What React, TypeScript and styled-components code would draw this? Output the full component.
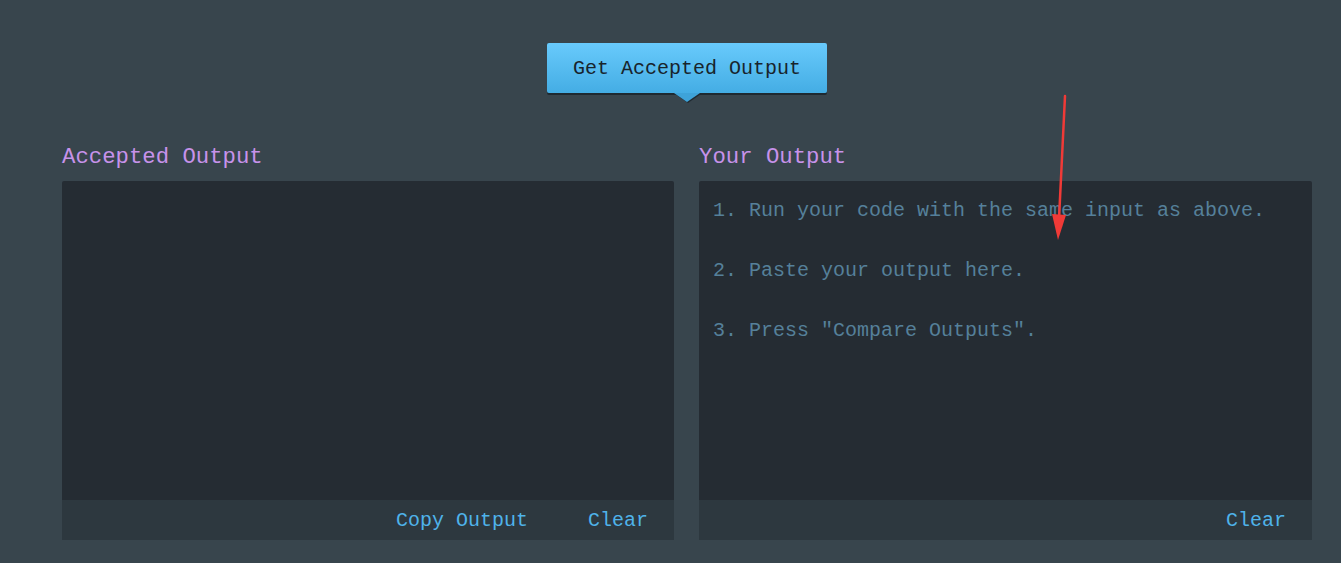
import React from 'react';
import styled, {createGlobalStyle} from "styled-components";

const GlobalStyle = createGlobalStyle`
    html, body {
        margin: 0;
        padding: 0;
        background: #38454d;
    }
    body {
        font-family: "Liberation Mono", "DejaVu Sans Mono", monospace;
    }
`

const placeholder = '1. Run your code with the same input as above.\n\n2. Paste your output here.\n\n3. Press "Compare Outputs".'

type PanelProps = {
    title: string
    placeholder?: string
    actions: string[]
}

const Panel = (props: PanelProps) => {
    return (
        <StyledPanel>
            <Heading>{props.title}</Heading>
            <Area placeholder={props.placeholder} spellCheck={false}/>
            <Footer>
                {props.actions.map(a => <Action key={a}>{a}</Action>)}
            </Footer>
        </StyledPanel>
    );
};

const Arrow = () => (
    <ArrowSvg width="30" height="160" viewBox="0 0 30 160">
        <path d="M21 2 L15 125" stroke="#f03a37" strokeWidth="2.5" strokeLinecap="round"/>
        <path d="M8 120 L22 121 L14 146 Z" fill="#f03a37"/>
    </ArrowSvg>
)

export default function App() {
    return (
        <Page>
            <GlobalStyle/>
            <Top>
                <FetchButton>Get Accepted Output</FetchButton>
            </Top>
            <Columns>
                <Panel title="Accepted Output" actions={['Copy Output', 'Clear']}/>
                <Panel title="Your Output" placeholder={placeholder} actions={['Clear']}/>
            </Columns>
            <Arrow/>
        </Page>
    );
}

const Page = styled.div`
    position: relative;
    width: 1250px;
    height: 520px;
    padding: 43px 0 0 62px;
`

const Top = styled.div`
    display: flex;
    justify-content: center;
`

const FetchButton = styled.button`
    position: relative;
    width: 280px;
    height: 50px;
    border: none;
    border-radius: 2px;
    background: linear-gradient(#68cafc, #44ade4);
    box-shadow: 0 2px 0 #1f2a31;
    color: #18242c;
    font-family: "Liberation Mono", "DejaVu Sans Mono", monospace;
    font-size: 20px;
    padding: 0;
    cursor: pointer;

    &::after {
        content: '';
        position: absolute;
        left: 127px;
        top: 50px;
        border-left: 13px solid transparent;
        border-right: 13px solid transparent;
        border-top: 9px solid #3ea3d9;
        filter: drop-shadow(1px 1px 0 #1f2a31);
    }
`

const Columns = styled.div`
    display: flex;
    gap: 25px;
    margin-top: 50px;
`

const StyledPanel = styled.div`
    width: 612px;
    flex-shrink: 0;
    display: flex;
    flex-direction: column;

    & + & {
        width: 613px;
    }
`

const Heading = styled.h2`
    margin: 0 0 10px;
    color: #c792ea;
    font-size: 22.3px;
    font-weight: normal;
    line-height: 28px;
`

const Area = styled.textarea`
    height: 319px;
    resize: none;
    border: none;
    outline: none;
    border-radius: 2px 2px 0 0;
    background: #252c33;
    padding: 15px 14px 14px;
    box-sizing: border-box;
    color: #a8c4d6;
    font-family: "Liberation Mono", "DejaVu Sans Mono", monospace;
    font-size: 20px;
    line-height: 30px;

    &::placeholder {
        color: #55809a;
        opacity: 1;
    }
`

const Footer = styled.div`
    height: 40px;
    background: #2d383f;
    display: flex;
    justify-content: flex-end;
    align-items: center;
    gap: 60px;
    padding-right: 26px;
`

const Action = styled.span`
    color: #4fb3ea;
    font-size: 20px;
    cursor: pointer;
`

const ArrowSvg = styled.svg`
    position: absolute;
    left: 1044px;
    top: 94px;
`
